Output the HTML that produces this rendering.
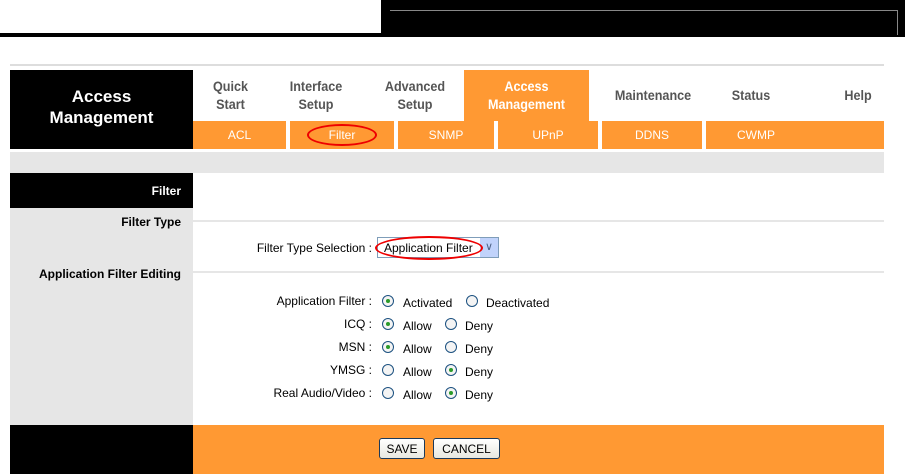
<html><head><style>
body{margin:0;width:905px;height:474px;position:relative;background:#fff;font-family:"Liberation Sans",sans-serif;overflow:hidden}
.a{position:absolute}
.t{position:absolute;font-size:12px;color:#000;white-space:nowrap}
.nav{position:absolute;color:#555;font-size:14px;font-weight:bold;text-align:center;line-height:18px;transform:scaleX(.9)}
.sub{position:absolute;top:121px;height:28px;line-height:28px;color:#fff;font-size:12px;text-align:center}
.sep{position:absolute;top:121px;width:4px;height:28px;background:#fff}
.r{position:absolute;width:12px;height:12px;border:1px solid #1c5180;border-radius:50%;background:#f4f4f4;box-sizing:border-box}
.r.on::after{content:"";position:absolute;left:3px;top:3px;width:4px;height:4px;border-radius:50%;background:#2a9a2a}
.lb{position:absolute;font-size:12px;text-align:right;width:200px}
.btn{position:absolute;top:438px;height:21px;border:1px solid #1c3a5a;border-radius:3px;background:linear-gradient(#fff,#e8e8e0);font-size:12px;line-height:20px;text-align:center;box-sizing:border-box}
</style></head><body>
<div class="a" style="left:0;top:33px;width:905px;height:4px;background:#000"></div>
<div class="a" style="left:381px;top:0;width:524px;height:37px;background:#000"></div>
<div class="a" style="left:390px;top:10px;width:507px;height:1px;background:#888"></div>
<div class="a" style="left:897px;top:10px;width:1px;height:25px;background:#888"></div>

<div class="a" style="left:10px;top:64px;width:874px;height:2px;background:#ddd"></div>
<div class="a" style="left:10px;top:70px;width:183px;height:79px;background:#000"></div>
<div class="a" style="left:10px;top:86px;width:183px;text-align:center;color:#fff;font-weight:bold;font-size:17px;line-height:21px">Access<br>Management</div>
<div class="a" style="left:464px;top:70px;width:125px;height:51px;background:#f93"></div>
<div class="nav" style="left:193px;top:77px;width:75px">Quick<br>Start</div>
<div class="nav" style="left:275px;top:77px;width:82px">Interface<br>Setup</div>
<div class="nav" style="left:372px;top:77px;width:86px">Advanced<br>Setup</div>
<div class="nav" style="left:464px;top:77px;width:125px;color:#fff">Access<br>Management</div>
<div class="nav" style="left:597px;top:86px;width:112px">Maintenance</div>
<div class="nav" style="left:720px;top:86px;width:62px">Status</div>
<div class="nav" style="left:833px;top:86px;width:50px">Help</div>
<div class="a" style="left:193px;top:121px;width:691px;height:28px;background:#f93"></div>
<div class="sub" style="left:193px;width:93px">ACL</div>
<div class="sep" style="left:286px"></div>
<div class="sub" style="left:290px;width:104px">Filter</div>
<div class="a" style="left:307px;top:124px;width:70px;height:22px;border:2px solid #e00;border-radius:50%;box-sizing:border-box"></div>
<div class="sep" style="left:394px"></div>
<div class="sub" style="left:398px;width:96px">SNMP</div>
<div class="sep" style="left:494px"></div>
<div class="sub" style="left:498px;width:100px">UPnP</div>
<div class="sep" style="left:598px"></div>
<div class="sub" style="left:602px;width:100px">DDNS</div>
<div class="sep" style="left:702px"></div>
<div class="sub" style="left:706px;width:100px">CWMP</div>
<div class="a" style="left:10px;top:152px;width:874px;height:21px;background:#e6e6e6"></div>

<div class="a" style="left:10px;top:173px;width:183px;height:35px;background:#000"></div>
<div class="a" style="left:10px;top:208px;width:183px;height:217px;background:#e6e6e6"></div>
<div class="t" style="left:10px;top:184px;width:171px;text-align:right;color:#fff;font-weight:bold">Filter</div>
<div class="t" style="left:10px;top:215px;width:171px;text-align:right;font-weight:bold">Filter Type</div>
<div class="t" style="left:10px;top:267px;width:171px;text-align:right;font-weight:bold">Application Filter Editing</div>
<div class="a" style="left:193px;top:220px;width:691px;height:2px;background:#e6e6e6"></div>
<div class="a" style="left:193px;top:271px;width:691px;height:2px;background:#e6e6e6"></div>

<div class="lb" style="left:172px;top:241px">Filter Type Selection :</div>
<div class="a" style="left:377px;top:237px;width:122px;height:21px;border:1px solid #7f9db9;box-sizing:border-box;background:#fff"></div>
<div class="a" style="left:480px;top:238px;width:18px;height:19px;background:#c1d3fb"></div>
<div class="t" style="left:480px;top:240px;width:18px;text-align:center;color:#4d6185;font-size:11px">&#8744;</div>
<div class="t" style="left:384px;top:241px">Application Filter</div>
<div class="a" style="left:375px;top:236px;width:108px;height:24px;border:2px solid #e00;border-radius:50%;box-sizing:border-box"></div>

<div class="lb" style="left:172px;top:294px">Application Filter :</div>
<div class="r on" style="left:382px;top:295px"></div><div class="t" style="left:403px;top:296px">Activated</div>
<div class="r" style="left:466px;top:295px"></div><div class="t" style="left:486px;top:296px">Deactivated</div>
<div class="lb" style="left:172px;top:317px">ICQ :</div>
<div class="r on" style="left:382px;top:318px"></div><div class="t" style="left:403px;top:319px">Allow</div>
<div class="r" style="left:445px;top:318px"></div><div class="t" style="left:465px;top:319px">Deny</div>
<div class="lb" style="left:172px;top:340px">MSN :</div>
<div class="r on" style="left:382px;top:341px"></div><div class="t" style="left:403px;top:342px">Allow</div>
<div class="r" style="left:445px;top:341px"></div><div class="t" style="left:465px;top:342px">Deny</div>
<div class="lb" style="left:172px;top:363px">YMSG :</div>
<div class="r" style="left:382px;top:364px"></div><div class="t" style="left:403px;top:365px">Allow</div>
<div class="r on" style="left:445px;top:364px"></div><div class="t" style="left:465px;top:365px">Deny</div>
<div class="lb" style="left:172px;top:386px">Real Audio/Video :</div>
<div class="r" style="left:382px;top:387px"></div><div class="t" style="left:403px;top:388px">Allow</div>
<div class="r on" style="left:445px;top:387px"></div><div class="t" style="left:465px;top:388px">Deny</div>

<div class="a" style="left:10px;top:425px;width:183px;height:49px;background:#000"></div>
<div class="a" style="left:193px;top:425px;width:691px;height:49px;background:#f93"></div>
<div class="btn" style="left:379px;width:46px">SAVE</div>
<div class="btn" style="left:433px;width:67px">CANCEL</div>
</body></html>
